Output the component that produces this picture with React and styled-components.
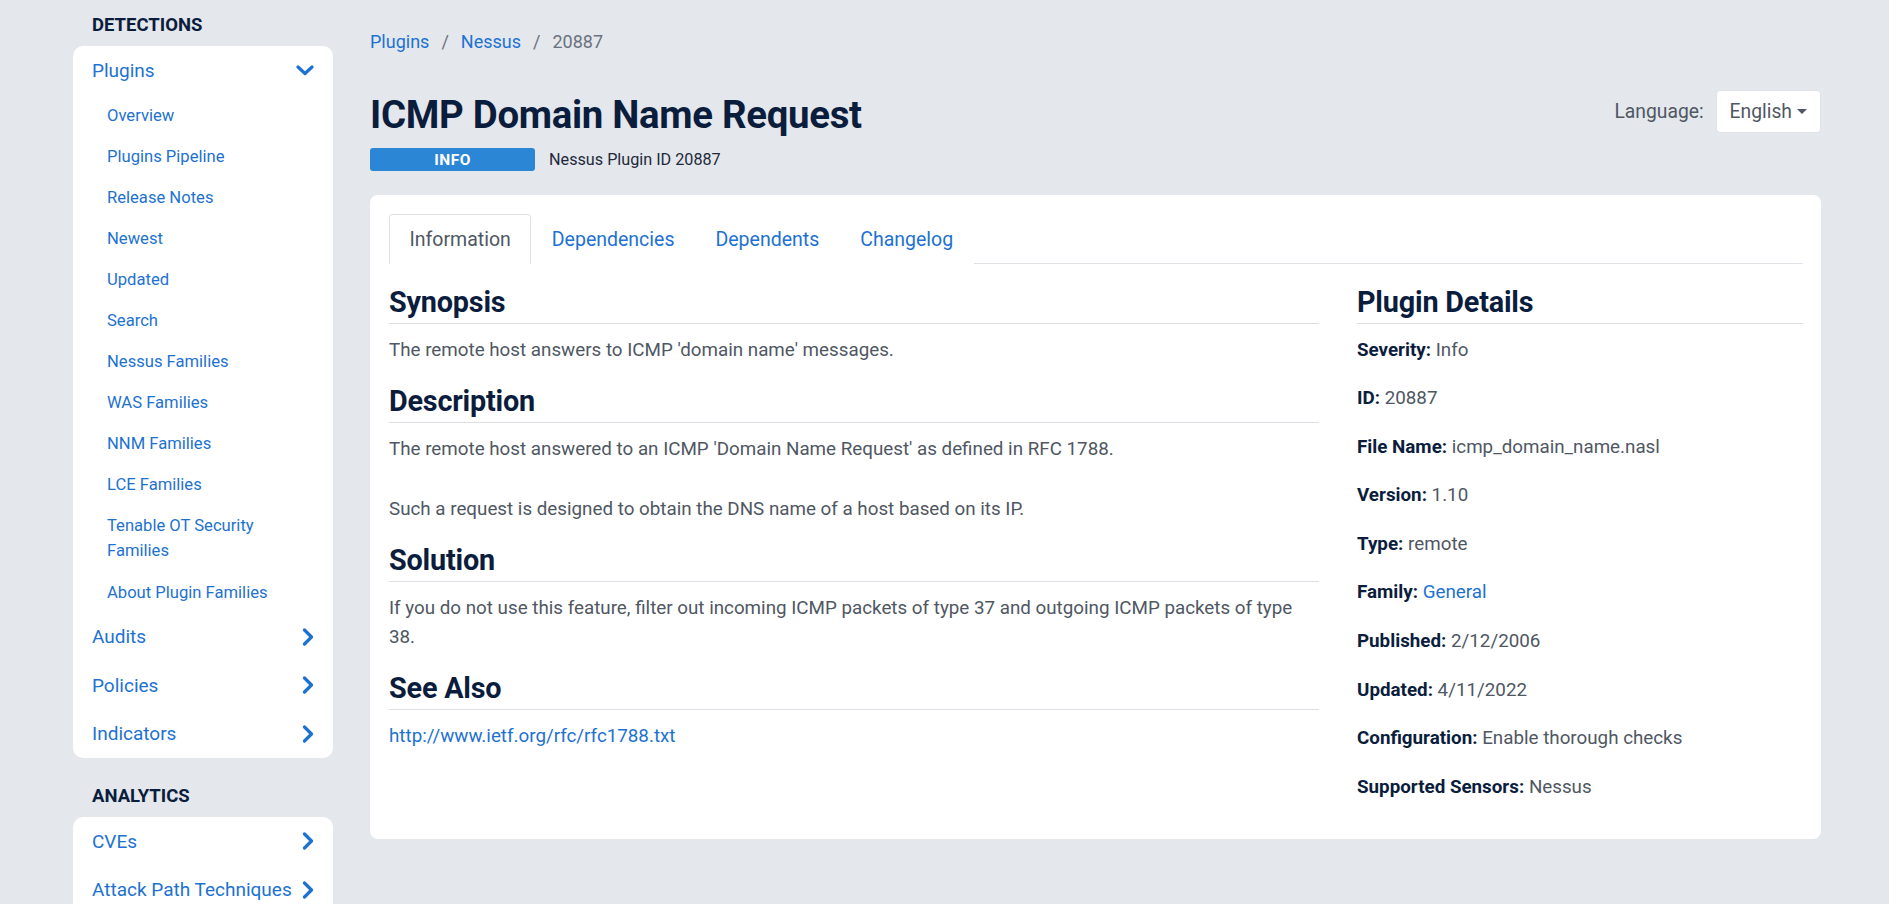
import React from "react";
import styled, { createGlobalStyle } from "styled-components";

const GlobalStyle = createGlobalStyle`
  html, body {
    margin: 0;
    padding: 0;
    background: #e4e7eb;
    font-family: Roboto, "Liberation Sans", Arial, sans-serif;
    color: #4f5763;
  }
  * { box-sizing: border-box; }
  a { text-decoration: none; }
`;

const detectionItems = [
  "Overview",
  "Plugins Pipeline",
  "Release Notes",
  "Newest",
  "Updated",
  "Search",
  "Nessus Families",
  "WAS Families",
  "NNM Families",
  "LCE Families",
  "Tenable OT Security Families",
  "About Plugin Families",
];

const details = [
  ["Severity", "Info"],
  ["ID", "20887"],
  ["File Name", "icmp_domain_name.nasl"],
  ["Version", "1.10"],
  ["Type", "remote"],
  ["Family", "General", true],
  ["Published", "2/12/2006"],
  ["Updated", "4/11/2022"],
  ["Configuration", "Enable thorough checks"],
  ["Supported Sensors", "Nessus"],
];

const ChevronDown = () => (
  <svg width="18" height="11" viewBox="0 0 18 11">
    <polyline points="2,2 9,8.5 16,2" fill="none" stroke="#1d72d1" strokeWidth="3.2" strokeLinecap="round" strokeLinejoin="round" />
  </svg>
);

const ChevronRight = () => (
  <svg width="12" height="18" viewBox="0 0 12 18">
    <polyline points="2.5,2 9.5,9 2.5,16" fill="none" stroke="#1d72d1" strokeWidth="3.2" strokeLinecap="round" strokeLinejoin="round" />
  </svg>
);

const App = () => {
  return (
    <>
      <GlobalStyle />
      <Page>
        <Sidebar>
          <GroupTitle>DETECTIONS</GroupTitle>
          <NavCard>
            <NavItem>
              <span>Plugins</span>
              <ChevronDown />
            </NavItem>
            <SubList>
              {detectionItems.map((item) => (
                <SubItem key={item}>{item}</SubItem>
              ))}
            </SubList>
            <NavItem>
              <span>Audits</span>
              <ChevronRight />
            </NavItem>
            <NavItem>
              <span>Policies</span>
              <ChevronRight />
            </NavItem>
            <NavItem>
              <span>Indicators</span>
              <ChevronRight />
            </NavItem>
          </NavCard>
          <GroupTitle $spaced>ANALYTICS</GroupTitle>
          <NavCard>
            <NavItem>
              <span>CVEs</span>
              <ChevronRight />
            </NavItem>
            <NavItem>
              <span>Attack Path Techniques</span>
              <ChevronRight />
            </NavItem>
          </NavCard>
        </Sidebar>

        <Main>
          <Breadcrumb>
            <Crumb href="#">Plugins</Crumb>
            <Sep>/</Sep>
            <Crumb href="#">Nessus</Crumb>
            <Sep>/</Sep>
            <span>20887</span>
          </Breadcrumb>

          <Header>
            <div>
              <Title>ICMP Domain Name Request</Title>
              <BadgeRow>
                <Badge>INFO</Badge>
                <PluginId>Nessus Plugin ID 20887</PluginId>
              </BadgeRow>
            </div>
            <LangBox>
              <LangLabel>Language:</LangLabel>
              <LangSelect>
                English
                <Caret />
              </LangSelect>
            </LangBox>
          </Header>

          <Card>
            <Tabs>
              <Tab $active>Information</Tab>
              <Tab>Dependencies</Tab>
              <Tab>Dependents</Tab>
              <Tab>Changelog</Tab>
            </Tabs>
            <Columns>
              <div>
                <Section>
                  <SectionTitle>Synopsis</SectionTitle>
                  <Text>The remote host answers to ICMP 'domain name' messages.</Text>
                </Section>
                <Section>
                  <SectionTitle>Description</SectionTitle>
                  <Text $gap>The remote host answered to an ICMP 'Domain Name Request' as defined in RFC 1788.</Text>
                  <Text>Such a request is designed to obtain the DNS name of a host based on its IP.</Text>
                </Section>
                <Section>
                  <SectionTitle>Solution</SectionTitle>
                  <Text>
                    If you do not use this feature, filter out incoming ICMP packets of type 37 and outgoing ICMP packets of type 38.
                  </Text>
                </Section>
                <Section>
                  <SectionTitle>See Also</SectionTitle>
                  <Text>
                    <Link href="#">http://www.ietf.org/rfc/rfc1788.txt</Link>
                  </Text>
                </Section>
              </div>
              <div>
                <SectionTitle>Plugin Details</SectionTitle>
                {details.map(([label, value, link]) => (
                  <DetailRow key={label}>
                    <strong>{label}:</strong> {link ? <Link href="#">{value}</Link> : value}
                  </DetailRow>
                ))}
              </div>
            </Columns>
          </Card>
        </Main>
      </Page>
    </>
  );
};

export default App;

const Page = styled.div`
  display: flex;
  gap: 37px;
  padding: 0 68px 0 73px;
  min-height: 904px;
`;

const Sidebar = styled.aside`
  width: 260px;
  flex-shrink: 0;
  padding-top: 13.5px;
`;

const GroupTitle = styled.div`
  font-size: 18.5px;
  font-weight: 700;
  line-height: 22px;
  color: #0b1d3d;
  padding-left: 19px;
  margin: ${(p) => (p.$spaced ? "27px 0 10px" : "0 0 10.5px")};
`;

const NavCard = styled.div`
  background: #fff;
  border-radius: 10px;
`;

const NavItem = styled.div`
  display: flex;
  align-items: center;
  justify-content: space-between;
  height: 48.5px;
  padding: 0 19px;
  font-size: 19px;
  color: #1d72d1;
`;

const SubList = styled.div`
  padding-left: 34px;
  padding-right: 50px;
`;

const SubItem = styled.div`
  padding: 8.05px 0;
  font-size: 16.6px;
  line-height: 25px;
  color: #1d72d1;
`;

const Main = styled.main`
  flex: 1;
  padding-top: 28px;
`;

const Breadcrumb = styled.div`
  font-size: 18px;
  line-height: 27px;
  color: #6b7280;
`;

const Crumb = styled.a`
  color: #1d72d1;
`;

const Sep = styled.span`
  margin: 0 12px;
  color: #6b7280;
`;

const Header = styled.div`
  display: flex;
  justify-content: space-between;
  align-items: flex-start;
  margin-top: 36px;
`;

const Title = styled.h1`
  margin: 0;
  font-size: 38.4px;
  line-height: 48px;
  font-weight: 700;
  color: #0b1d3d;
  letter-spacing: -0.3px;
`;

const BadgeRow = styled.div`
  display: flex;
  align-items: center;
  gap: 14px;
  margin-top: 9px;
`;

const Badge = styled.span`
  display: inline-flex;
  align-items: center;
  justify-content: center;
  width: 165px;
  height: 23px;
  background: #2b86d6;
  border-radius: 3px;
  color: #fff;
  font-size: 15.5px;
  font-weight: 700;
  letter-spacing: 0.5px;
`;

const PluginId = styled.span`
  font-size: 16.2px;
  color: #1e2a3b;
`;

const LangBox = styled.div`
  display: flex;
  align-items: center;
  gap: 12px;
  margin-top: -1px;
`;

const LangLabel = styled.span`
  font-size: 19.3px;
  color: #4f5763;
`;

const LangSelect = styled.div`
  display: flex;
  align-items: center;
  gap: 5px;
  height: 43px;
  padding: 0 13px;
  background: #fff;
  border: 1px solid #dfe2e6;
  border-radius: 4px;
  font-size: 19.3px;
  color: #4f5763;
`;

const Caret = styled.span`
  width: 0;
  height: 0;
  border-left: 5px solid transparent;
  border-right: 5px solid transparent;
  border-top: 5px solid #4f5763;
`;

const Card = styled.div`
  margin-top: 24px;
  background: #fff;
  border-radius: 8px;
  padding: 19px 18px 18px 19px;
`;

const Tabs = styled.div`
  display: flex;
  border-bottom: 1px solid #dee2e6;
`;

const Tab = styled.div`
  height: 50px;
  display: flex;
  align-items: center;
  padding: 0 19.5px;
  margin-bottom: -1px;
  font-size: 19.5px;
  color: ${(p) => (p.$active ? "#4f5763" : "#1d72d1")};
  background: #fff;
  border: 1px solid ${(p) => (p.$active ? "#dee2e6" : "transparent")};
  border-bottom-color: ${(p) => (p.$active ? "#fff" : "transparent")};
  border-radius: 4px 4px 0 0;
`;

const Columns = styled.div`
  display: grid;
  grid-template-columns: 1fr 446px;
  gap: 38px;
  padding-top: 23px;
`;

const Section = styled.section`
  margin-bottom: 21.5px;
`;

const SectionTitle = styled.h2`
  margin: 0 0 11.5px;
  padding-bottom: 5px;
  border-bottom: 1px solid #dcdee3;
  font-size: 28.8px;
  line-height: 31px;
  font-weight: 700;
  color: #0b1d3d;
  letter-spacing: -0.2px;
`;

const Text = styled.p`
  margin: 0 0 ${(p) => (p.$gap ? "31px" : "0")};
  font-size: 18.8px;
  line-height: 29px;
  color: #4f5763;
`;

const Link = styled.a`
  color: #1d72d1;
`;

const DetailRow = styled.p`
  margin: 0 0 19.6px;
  font-size: 18.8px;
  line-height: 29px;
  color: #4f5763;

  strong {
    color: #0b1d3d;
    font-weight: 700;
  }
`;
